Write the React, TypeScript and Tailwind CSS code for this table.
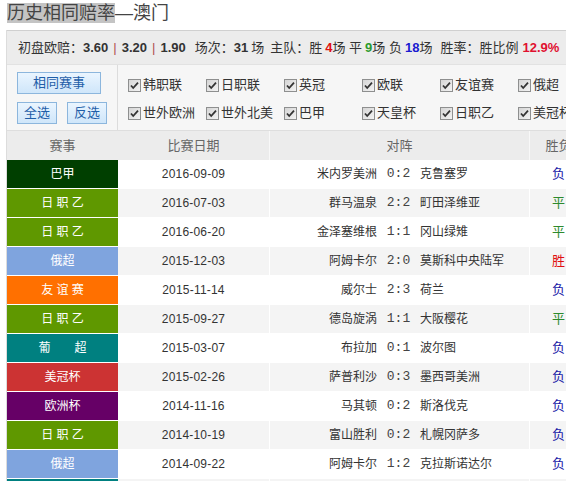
const rows = [
  { league: "巴甲", color: "bg-[#003f00]", date: "2016-09-09", home: "米内罗美洲", score: "0:2", away: "克鲁塞罗", res: "负" },
  { league: "日 职 乙", color: "bg-[#5f9800]", date: "2016-07-03", home: "群马温泉", score: "2:2", away: "町田泽维亚", res: "平" },
  { league: "日 职 乙", color: "bg-[#5f9800]", date: "2016-06-20", home: "金泽塞维根", score: "1:1", away: "冈山绿雉", res: "平" },
  { league: "俄超", color: "bg-[#7fa4de]", date: "2015-12-03", home: "阿姆卡尔", score: "2:0", away: "莫斯科中央陆军", res: "胜" },
  { league: "友 谊 赛", color: "bg-[#ff7000]", date: "2015-11-14", home: "威尔士", score: "2:3", away: "荷兰", res: "负" },
  { league: "日 职 乙", color: "bg-[#5f9800]", date: "2015-09-27", home: "德岛旋涡", score: "1:1", away: "大阪樱花", res: "平" },
  { league: "葡　　超", color: "bg-[#008080]", date: "2015-03-07", home: "布拉加", score: "0:1", away: "波尔图", res: "负" },
  { league: "美冠杯", color: "bg-[#cc3333]", date: "2015-02-26", home: "萨普利沙", score: "0:3", away: "墨西哥美洲", res: "负" },
  { league: "欧洲杯", color: "bg-[#660066]", date: "2014-11-16", home: "马其顿", score: "0:2", away: "斯洛伐克", res: "负" },
  { league: "日 职 乙", color: "bg-[#5f9800]", date: "2014-10-19", home: "富山胜利", score: "0:2", away: "札幌冈萨多", res: "负" },
  { league: "俄超", color: "bg-[#7fa4de]", date: "2014-09-22", home: "阿姆卡尔", score: "1:2", away: "克拉斯诺达尔", res: "负" },
  { league: "葡　　超", color: "bg-[#008080]", date: "2014-08-31", home: "波尔图", score: "2:0", away: "布拉加", res: "胜" },
];

const resColor: Record<string, string> = {
  负: "text-[#1a1aa8]",
  平: "text-[#2d8a2d]",
  胜: "text-[#e01010]",
};

const filters = [
  "韩职联", "日职联", "英冠", "欧联", "友谊赛", "俄超",
  "世外欧洲", "世外北美", "巴甲", "天皇杯", "日职乙", "美冠杯",
];

function CheckBox() {
  return (
    <svg width="13" height="13" viewBox="0 0 13 13" className="shrink-0">
      <defs>
        <linearGradient id="cbg" x1="0" y1="0" x2="1" y2="1">
          <stop offset="0" stopColor="#d4d4d4" />
          <stop offset="1" stopColor="#f4f4f4" />
        </linearGradient>
      </defs>
      <rect x="0.5" y="0.5" width="12" height="12" fill="url(#cbg)" stroke="#8e8f8f" />
      <path d="M3 6.5 L5.2 9 L10 3.6" fill="none" stroke="#333" strokeWidth="1.8" />
    </svg>
  );
}

function SmallButton({ children, className }: { children: React.ReactNode; className?: string }) {
  return (
    <button
      type="button"
      className={
        "flex items-center justify-center border border-[#8cb6dd] bg-gradient-to-b from-[#eaf5ff] to-[#cfe6fa] text-[13px] text-[#1f5ea8] " +
        (className ?? "")
      }
    >
      {children}
    </button>
  );
}

export default function App() {
  return (
    <div className="w-[566px] h-[481px] overflow-hidden bg-white text-[#333] [font-family:'Liberation_Sans','Noto_Sans_CJK_SC',sans-serif]">
      <div className="w-[600px]">
        {/* Title */}
        <div className="h-[30px] pl-[7px] pt-[2px] text-[18px] leading-[23px] text-[#444]">
          <span className="bg-[#c4c4c4]">历史相同赔率</span>—澳门
        </div>

        <div className="ml-[6px] border-l border-[#dcdcdc]">
          {/* Summary */}
          <div className="flex h-[34px] items-center border-t border-[#d0d0d0] bg-[#ececec] pl-[11px] text-[13px] whitespace-nowrap">
            <span>初盘欧赔：</span>
            <b>3.60</b>
            <span className="mx-[5px] text-[#b05050]">|</span>
            <b>3.20</b>
            <span className="mx-[5px] text-[#b05050]">|</span>
            <b>1.90</b>
            <span className="ml-[9px]">场次：</span>
            <b>31</b>
            <span className="ml-[3px]">场</span>
            <span className="ml-[6px]">主队：胜</span>
            <b className="ml-[3px] text-[#e01010]">4</b>
            <span>场 平</span>
            <b className="ml-[3px] text-[#2d9a2d]">9</b>
            <span>场 负</span>
            <b className="ml-[3px] text-[#1a1ad0]">18</b>
            <span>场</span>
            <span className="ml-[8px]">胜率：胜比例</span>
            <b className="ml-[4px] text-[#e01030]">12.9%</b>
          </div>

          {/* Filters */}
          <div className="flex h-[66px] border-t border-[#e2e2e2] bg-[#f6f6f6]">
            <div className="flex w-[111px] shrink-0 flex-col gap-[8px] border-r border-[#dcdcdc] pl-[10px] pt-[7px]">
              <SmallButton className="h-[22px] w-[84px]">相同赛事</SmallButton>
              <div className="flex gap-[10px]">
                <SmallButton className="h-[22px] w-[40px]">全选</SmallButton>
                <SmallButton className="h-[22px] w-[40px]">反选</SmallButton>
              </div>
            </div>
            <div className="grid grid-cols-[repeat(6,78px)] auto-rows-[28px] pl-[10px] pt-[6px]">
              {filters.map((f) => (
                <div key={f} className="flex items-center gap-[2px] text-[13px] text-[#333]">
                  <CheckBox />
                  <span>{f}</span>
                </div>
              ))}
            </div>
          </div>

          {/* Header */}
          <div className="flex h-[30px] items-center border-t border-[#dedede] bg-[#ececec] text-[13px] text-[#666]">
            <div className="w-[111px] text-center">赛事</div>
            <div className="flex h-full w-[151px] items-center justify-center">比赛日期</div>
            <div className="flex h-full w-[260px] items-center justify-center border-l border-[#f8f8f8]">对阵</div>
            <div className="flex h-full w-[58px] items-center justify-center border-l border-[#f8f8f8]">胜负</div>
          </div>

          {/* Rows */}
          {rows.map((r, i) => (
            <div
              key={i}
              className={
                "flex h-[29px] border-b border-white text-[12px] " +
                (i % 2 === 0 ? "bg-white" : "bg-[#f4f4f4]")
              }
            >
              <div className={"flex w-[111px] items-center justify-center text-white " + r.color}>
                {r.league}
              </div>
              <div className="flex w-[151px] items-center justify-center tracking-[0.2px]">{r.date}</div>
              <div className="flex w-[260px] items-center border-l border-white">
                <div className="w-[108px] pr-[1px] text-right">{r.home}</div>
                <div className="w-[41px] text-center [font-family:'Liberation_Mono',monospace] text-[13px] text-[#444]">
                  {r.score}
                </div>
                <div className="flex-1 pl-[1px]">{r.away}</div>
              </div>
              <div className={"flex w-[58px] items-center justify-center border-l border-white text-[13px] " + resColor[r.res]}>
                {r.res}
              </div>
            </div>
          ))}
        </div>
      </div>
    </div>
  );
}
